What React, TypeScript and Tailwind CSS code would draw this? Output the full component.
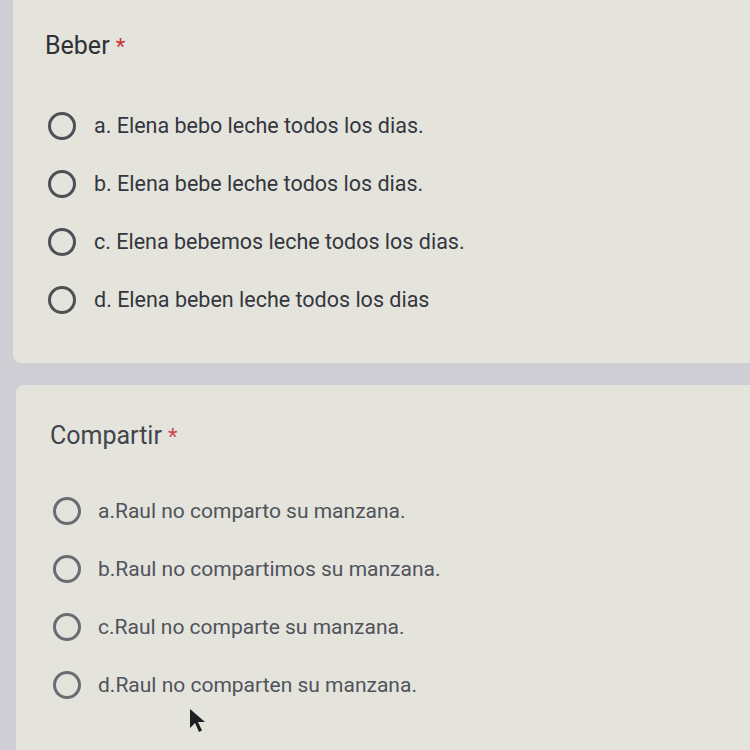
import React from 'react';

const beber = [
  'a. Elena bebo leche todos los dias.',
  'b. Elena bebe leche todos los dias.',
  'c. Elena bebemos leche todos los dias.',
  'd. Elena beben leche todos los dias',
];

const compartir = [
  'a.Raul no comparto su manzana.',
  'b.Raul no compartimos su manzana.',
  'c.Raul no comparte su manzana.',
  'd.Raul no comparten su manzana.',
];

const Radio: React.FC<{ muted?: boolean }> = ({ muted }) => (
  <span
    className={
      'block w-[28px] h-[28px] rounded-full border-[3px] shrink-0 ' +
      (muted ? 'border-[#6a6c72]' : 'border-[#4e5056]')
    }
  />
);

export default function App() {
  return (
    <div
      className="w-[750px] h-[750px] overflow-hidden bg-[#d0ced5] relative"
      style={{ fontFamily: 'Roboto, "Liberation Sans", sans-serif' }}
    >
      {/* first question */}
      <div className="ml-[13px] h-[363px] bg-[#e4e4dd] rounded-bl-[8px] pl-[32px] pt-[32px]">
        <div className="text-[25px] text-[#2f3137] leading-[28px]">
          Beber <span className="text-[#c5353a] text-[22px]">*</span>
        </div>
        <div className="mt-[51px] flex flex-col gap-[30px]">
          {beber.map((t) => (
            <div key={t} className="flex items-center gap-[18px] pl-[3px]">
              <Radio />
              <span className="text-[21.5px] text-[#34363d] leading-[28px]">{t}</span>
            </div>
          ))}
        </div>
      </div>

      {/* second question */}
      <div className="mt-[22px] ml-[16px] h-[365px] bg-[#e4e4dd] rounded-tl-[8px] pl-[34px] pt-[37px]">
        <div className="text-[25px] text-[#42444b] leading-[28px]">
          Compartir <span className="text-[#d0474c] text-[22px]">*</span>
        </div>
        <div className="mt-[46px] flex flex-col gap-[30px]">
          {compartir.map((t) => (
            <div key={t} className="flex items-center gap-[17px] pl-[3px]">
              <Radio muted />
              <span className="text-[21px] text-[#50535a] leading-[28px]">{t}</span>
            </div>
          ))}
        </div>
      </div>

      {/* mouse pointer */}
      <svg className="absolute left-[189px] top-[708px]" width="18" height="26" viewBox="0 0 18 26">
        <path d="M1 1 L1 20 L6 15 L10 24 L13 22.5 L9 14 L16 14 Z" fill="#1e1f22" />
      </svg>
    </div>
  );
}
